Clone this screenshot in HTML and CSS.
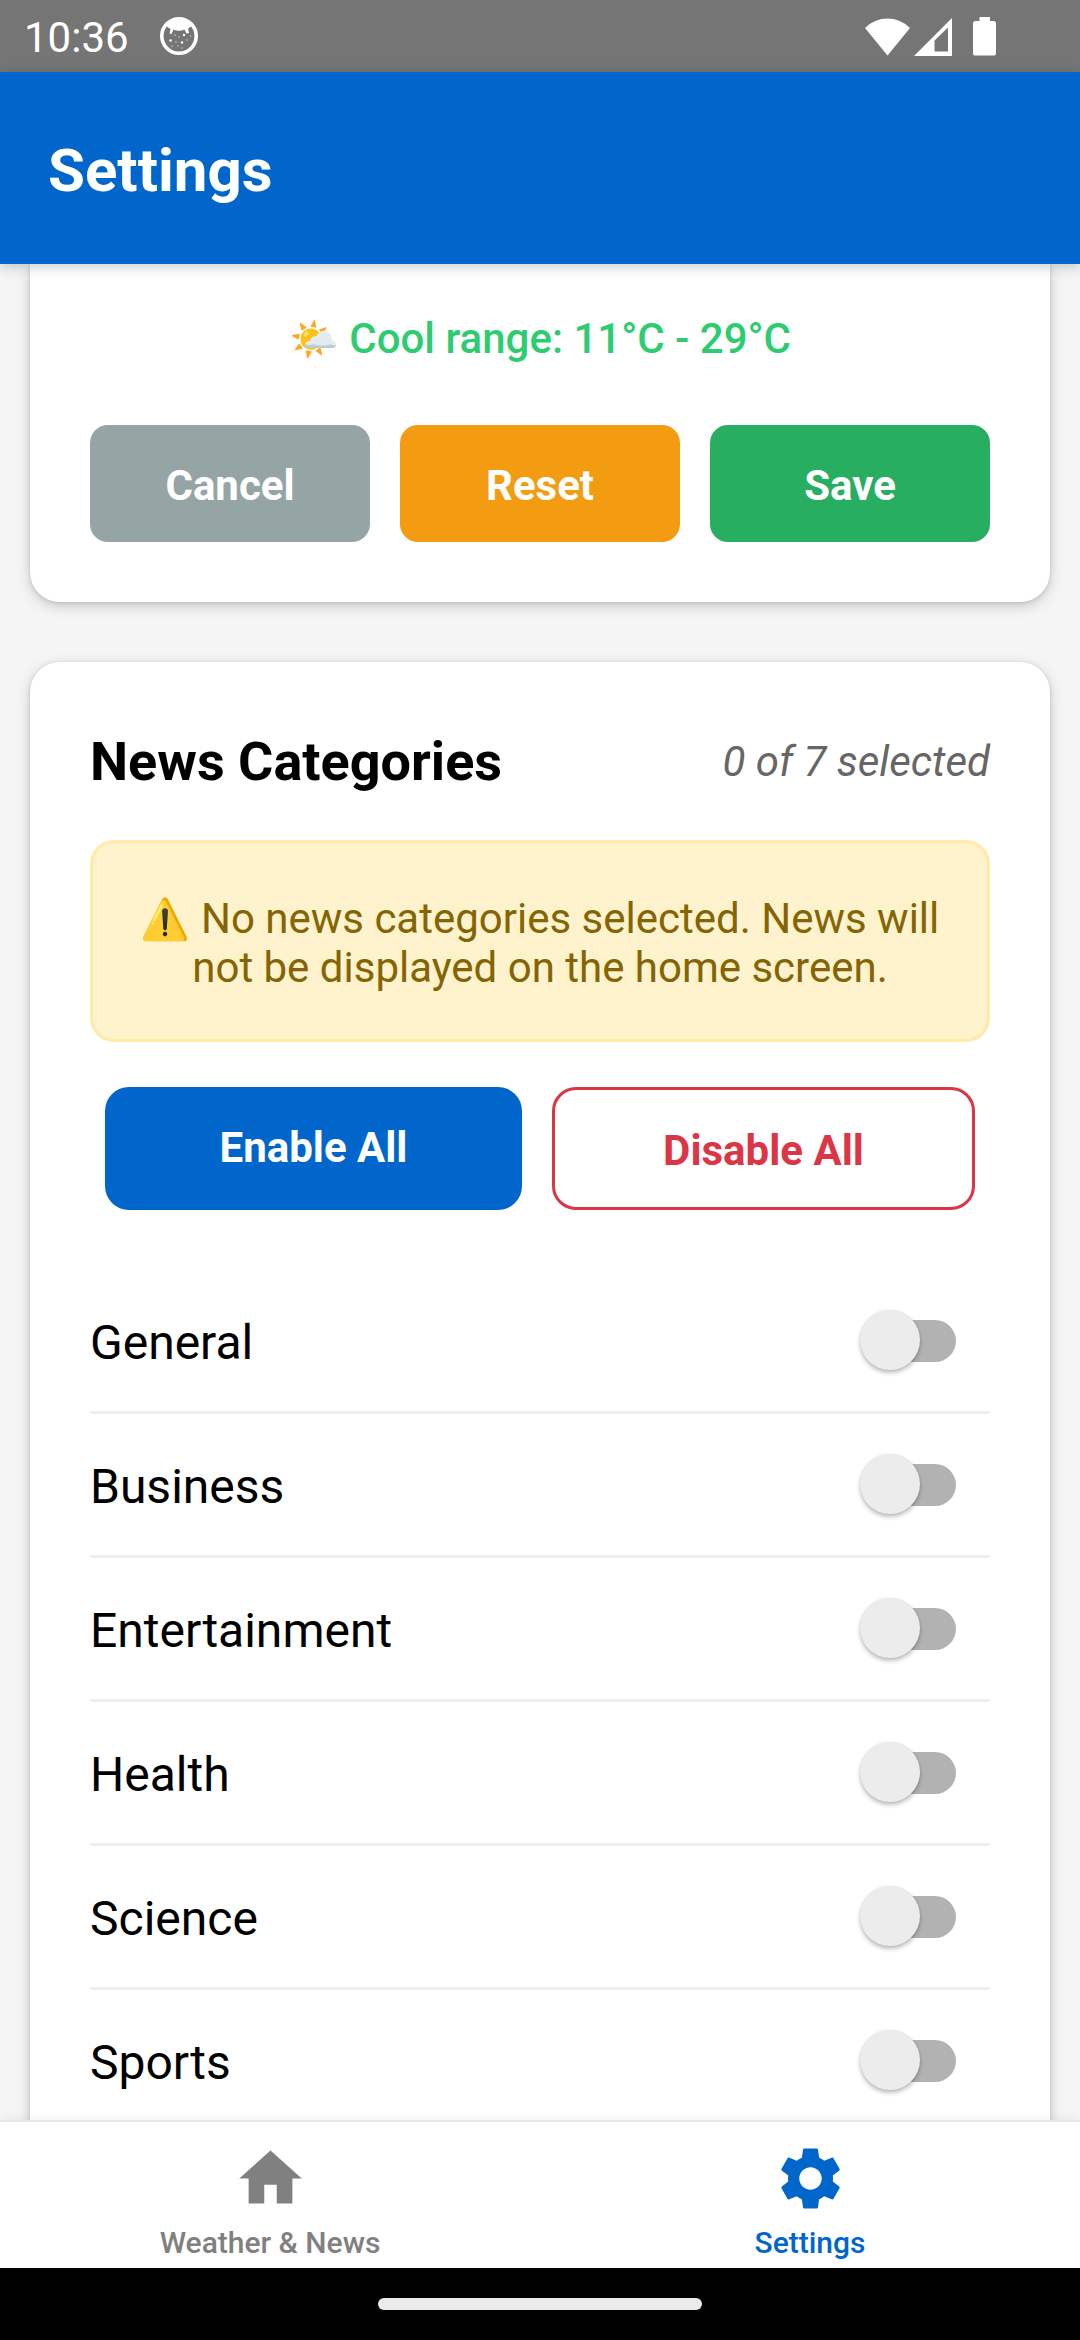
FILE: index.html
```html
<!DOCTYPE html>
<html lang="en">
<head>
<meta charset="utf-8">
<title>Settings</title>
<link rel="stylesheet" href="styles.css">
</head>
<body>
<div class="screen">
  <div class="status-bar">
    <span class="clock">10:36</span>
    <svg class="notif-icon" viewBox="0 0 40 40">
      <circle cx="20" cy="20" r="17.200" fill="none" stroke="#fff" stroke-width="3.600"/>
      <path d="M7 10C13 0 27 0 33 10L29 12.500 30 17 27.500 17.500 25.500 13.500Q20 16 14.500 13.500L12.500 18 10.500 17.500 11.500 13Z" fill="#fff"/>
      <g fill="#fff"><circle cx="11.500" cy="24.500" r="1.300"/><circle cx="23" cy="26.500" r="1.300"/><circle cx="25" cy="19" r="1.200"/></g>
      <g fill="#fff" opacity=".6"><circle cx="16" cy="19" r=".8"/><circle cx="17" cy="26" r=".8"/><circle cx="28" cy="24" r=".8"/><circle cx="19" cy="30" r=".8"/><circle cx="31.500" cy="20" r=".8"/><circle cx="20" cy="21" r=".8"/><circle cx="13" cy="30" r=".8"/><circle cx="23" cy="32" r=".8"/></g>
    </svg>
    <div class="system-icons">
      <svg class="wifi" viewBox="0 0 45 38"><path d="M22.500 37.500 0 10Q9.500 .5 22.500 .5T45 10Z" fill="#fff"/></svg>
      <svg class="signal" viewBox="0 0 38 38"><path d="M38 0V38H0ZM34 9.500 20.500 22.500V33.500H34Z" fill="#fff" fill-rule="evenodd"/></svg>
      <svg class="battery" viewBox="0 0 23 39"><path d="M6.500 0H17V4H20.500Q23 4 23 6.500V36Q23 38.600 20.500 38.600H2.500Q0 38.600 0 36V6.500Q0 4 2.500 4H6.500Z" fill="#fff"/></svg>
    </div>
  </div>
  <header class="app-header"><h1>Settings</h1></header>
  <main class="content">
    <section class="card range-card">
      <p class="range"><span class="emoji">🌤️</span> Cool range: 11°C - 29°C</p>
      <div class="actions">
        <button class="btn cancel">Cancel</button>
        <button class="btn reset">Reset</button>
        <button class="btn save">Save</button>
      </div>
    </section>
    <section class="card news-card">
      <div class="card-head">
        <h2>News Categories</h2>
        <span class="count">0 of 7 selected</span>
      </div>
      <p class="alert"><span class="emoji">⚠️</span> No news categories selected. News will not be displayed on the home screen.</p>
      <div class="bulk">
        <button class="btn enable">Enable All</button>
        <button class="btn disable">Disable All</button>
      </div>
      <ul class="categories">
        <li><span class="label">General</span><span class="switch"><span class="thumb"></span></span></li>
        <li><span class="label">Business</span><span class="switch"><span class="thumb"></span></span></li>
        <li><span class="label">Entertainment</span><span class="switch"><span class="thumb"></span></span></li>
        <li><span class="label">Health</span><span class="switch"><span class="thumb"></span></span></li>
        <li><span class="label">Science</span><span class="switch"><span class="thumb"></span></span></li>
        <li><span class="label">Sports</span><span class="switch"><span class="thumb"></span></span></li>
      </ul>
    </section>
  </main>
  <nav class="tabs">
    <a class="tab">
      <svg viewBox="0 0 24 24"><path d="M10 20v-6h4v6h5v-8h3L12 3 2 12h3v8z"/></svg>
      <span>Weather &amp; News</span>
    </a>
    <a class="tab active">
      <svg viewBox="0 0 24 24"><path d="M19.140 12.940c.04-.3.060-.61.060-.94 0-.32-.02-.64-.07-.94l2.030-1.580c.18-.14.230-.41.120-.61l-1.920-3.320c-.12-.22-.37-.29-.59-.22l-2.390.96c-.5-.38-1.030-.7-1.620-.94l-.36-2.540c-.04-.24-.24-.41-.48-.41h-3.840c-.24 0-.43.170-.47.410l-.36 2.540c-.59.240-1.130.570-1.620.940l-2.390-.96c-.22-.08-.47 0-.59.220L2.740 8.870c-.12.210-.08.470.120.610l2.030 1.580c-.05.3-.09.630-.09.940s.02.640.070.940l-2.030 1.580c-.18.140-.23.410-.12.610l1.920 3.320c.12.220.370.290.590.220l2.390-.96c.5.380 1.030.7 1.620.940l.36 2.540c.05.240.240.410.480.410h3.840c.24 0 .44-.17.470-.41l.36-2.540c.59-.24 1.130-.56 1.620-.94l2.390.96c.22.080.470 0 .59-.22l1.920-3.320c.12-.22.070-.47-.12-.61l-2.010-1.580zM12 15.600c-1.980 0-3.600-1.620-3.600-3.600s1.620-3.600 3.600-3.600 3.600 1.620 3.600 3.600-1.620 3.600-3.600 3.600z"/></svg>
      <span>Settings</span>
    </a>
  </nav>
  <div class="gesture-bar"><div class="handle"></div></div>
</div>
</body>
</html>
```
FILE: styles.css
```css
* { box-sizing: border-box; margin: 0; padding: 0; }
body { font-family: Roboto, "Noto Color Emoji", sans-serif; background: #f5f5f5; color: #000; }
.screen { width: 1080px; height: 2340px; display: flex; flex-direction: column; overflow: hidden; }

.status-bar { height: 72px; flex: none; background: #757575; color: #fff; display: flex; align-items: center; padding: 0 84px 0 24px; }
.clock { font-size: 42px; line-height: 72px; padding-top: 3px; }
.notif-icon { width: 40px; height: 40px; margin-left: 30px; }
.system-icons { margin-left: auto; display: flex; align-items: flex-end; height: 39px; }
.wifi { width: 45px; height: 38px; margin-right: 4px; }
.signal { width: 38px; height: 38px; margin-right: 21px; }
.battery { width: 23px; height: 39px; }

.app-header { height: 192px; flex: none; background: #0066cc; color: #fff; padding: 4px 48px 0; display: flex; align-items: center; box-shadow: 0 3px 12px rgba(0, 0, 0, .2); z-index: 1; }
.app-header h1 { font-size: 60px; font-weight: 700; }

.content { flex: 1; min-height: 0; overflow: hidden; padding: 0 30px; display: flex; flex-direction: column; gap: 60px; background: #f5f5f5; }
.card { flex: none; background: #fff; border-radius: 30px; padding: 60px; box-shadow: 0 4px 14px rgba(0, 0, 0, .18), 0 1px 4px rgba(0, 0, 0, .12); }
.range-card { border-radius: 0 0 30px 30px; padding-top: 47px; }
.range { font-size: 42px; line-height: 56px; font-weight: 500; color: #2ecc71; text-align: center; }
.emoji { font-size: 40px; line-height: 1; }
.actions { display: flex; gap: 30px; margin-top: 58px; }
.btn { font: 700 42px/56px Roboto, sans-serif; border: 0; padding: 33px 0 28px; color: #fff; text-align: center; }
.actions .btn { flex: 1; border-radius: 18px; }
.cancel { background: #95a5a6; }
.reset { background: #f39c12; }
.save { background: #27ae60; }

.card-head { display: flex; justify-content: space-between; align-items: center; padding-top: 4px; }
.card-head h2 { font-size: 54px; line-height: 72px; font-weight: 700; }
.count { font-size: 42px; line-height: 56px; font-style: italic; color: #666; }
.alert { margin-top: 42px; border: 3px solid #ffeaa7; border-radius: 24px; background: #fff3cd; color: #856404; font-size: 42px; line-height: 49px; text-align: center; padding: 51px 45px 47px; height: 202px; }
.bulk { display: flex; gap: 30px; padding: 0 15px; margin-top: 45px; }
.bulk .btn { height: 123px; border-radius: 24px; }
.bulk .enable { width: 417px; background: #0066cc; padding-bottom: 34px; }
.bulk .disable { width: 423px; background: #fff; color: #dc3545; border: 3px solid #dc3545; }

.categories { list-style: none; margin-top: 60px; }
.categories li { height: 144px; display: flex; align-items: center; justify-content: space-between; border-bottom: 3px solid #f0f0f0; }
.label { font-size: 48px; padding-top: 4px; }
.switch { width: 96px; height: 60px; margin: 0 34px 1px 0; position: relative; }
.switch::before { content: ""; position: absolute; left: 10px; right: 0; top: 10px; height: 42px; border-radius: 21px; background: #b2b2b2; }
.thumb { display: block; position: relative; width: 60px; height: 60px; border-radius: 50%; background: #ececec; box-shadow: 0 3px 4px rgba(0, 0, 0, .25), 0 0 2px rgba(0, 0, 0, .1); }

.tabs { flex: none; height: 148px; background: #fff; border-top: 2px solid #e8e8e8; display: flex; z-index: 1; box-shadow: 0 -2px 10px rgba(0, 0, 0, .05); }
.tab { flex: 1; display: flex; flex-direction: column; align-items: center; padding-top: 19px; color: gray; font-size: 30px; line-height: 35px; font-weight: 500; }
.tab svg { width: 75px; height: 75px; fill: currentColor; margin-bottom: 9px; }
.tab.active { color: #0066cc; }
.gesture-bar { flex: none; height: 72px; background: #000; display: flex; justify-content: center; align-items: center; z-index: 2; }
.handle { width: 324px; height: 12px; border-radius: 6px; background: #ebebeb; }
```
